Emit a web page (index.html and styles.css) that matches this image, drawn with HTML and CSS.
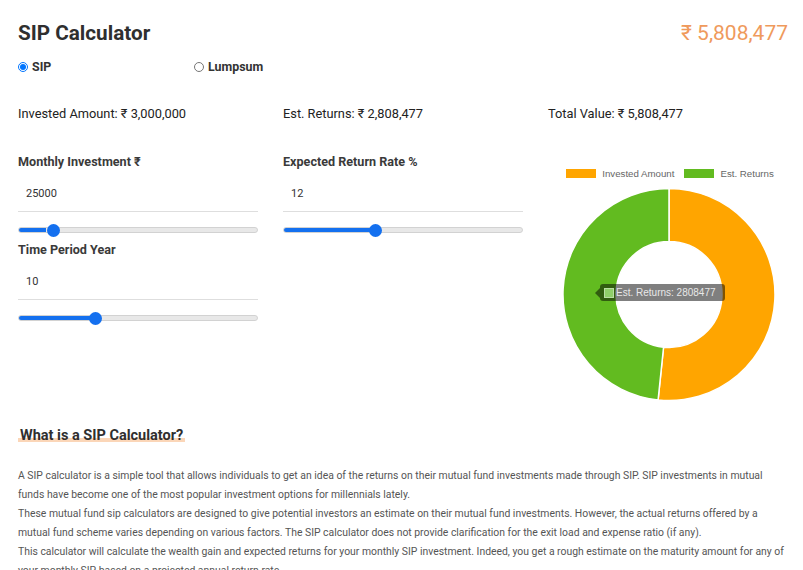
FILE: index.html
```html
<!DOCTYPE html>
<html lang="en">
<head>
<meta charset="utf-8">
<title>SIP Calculator</title>
<link rel="stylesheet" href="styles.css">
</head>
<body>
<div class="page">
  <header class="head">
    <h1 class="title">SIP Calculator</h1>
    <div class="total">₹ 5,808,477</div>
  </header>

  <div class="modes">
    <label class="mode mode-first"><input type="radio" name="mode" checked> SIP</label>
    <label class="mode"><input type="radio" name="mode"> Lumpsum</label>
  </div>

  <div class="summary">
    <div>Invested Amount: ₹ 3,000,000</div>
    <div>Est. Returns: ₹ 2,808,477</div>
    <div>Total Value: ₹ 5,808,477</div>
  </div>

  <div class="grid">
    <div class="col">
      <div class="field">
        <div class="label">Monthly Investment ₹</div>
        <input class="num" type="text" value="25000">
        <input class="range" type="range" min="500" max="200000" value="25000" style="--p:11.5%">
      </div>
      <div class="field">
        <div class="label">Time Period Year</div>
        <input class="num" type="text" value="10">
        <input class="range" type="range" min="1" max="30" value="10" style="--p:31.3%">
      </div>
    </div>
    <div class="col">
      <div class="field">
        <div class="label">Expected Return Rate %</div>
        <input class="num" type="text" value="12">
        <input class="range" type="range" min="1" max="30" value="12" style="--p:37.9%">
      </div>
    </div>
    <div class="col chart">
      <div class="legend">
        <span class="key key-orange"></span><span class="key-text">Invested Amount</span>
        <span class="key key-green"></span><span class="key-text">Est. Returns</span>
      </div>
      <div class="donut-wrap">
        <svg class="donut" width="240" height="226" viewBox="0 0 240 226">
          <path d="M121 6.5 A106 106 0 1 1 110.1 217.94 L115.55 165.22 A53 53 0 1 0 121 59.5 Z" fill="#ffa500" stroke="#fff" stroke-width="1.5"/>
          <path d="M110.1 217.94 A106 106 0 0 1 121 6.5 L121 59.5 A53 53 0 0 0 115.55 165.22 Z" fill="#62bb20" stroke="#fff" stroke-width="1.5"/>
        </svg>
        <div class="tip"><span class="tip-key"></span>Est. Returns: 2808477</div>
      </div>
    </div>
  </div>

  <h2 class="subhead"><span class="mark">What is a SIP Calculator?</span></h2>

  <div class="text">
    <p>A SIP calculator is a simple tool that allows individuals to get an idea of the returns on their mutual fund investments made through SIP. SIP investments in mutual funds have become one of the most popular investment options for millennials lately.</p>
    <p>These mutual fund sip calculators are designed to give potential investors an estimate on their mutual fund investments. However, the actual returns offered by a mutual fund scheme varies depending on various factors. The SIP calculator does not provide clarification for the exit load and expense ratio (if any).</p>
    <p>This calculator will calculate the wealth gain and expected returns for your monthly SIP investment. Indeed, you get a rough estimate on the maturity amount for any of your monthly SIP based on a projected annual return rate.</p>
  </div>
</div>
</body>
</html>
```

FILE: styles.css
```css
* { box-sizing: border-box; }
html, body { margin: 0; background: #fff; }
body { font-family: Roboto, "Liberation Sans", Arial, sans-serif; color: #222; }

.page { padding: 20px 15px 0 18px; }

.head { display: flex; justify-content: space-between; align-items: center; height: 26px; }
.title { margin: 0; font-size: 20.7px; line-height: 26px; font-weight: 700; color: #2f2f2f; }
.total { font-size: 21px; line-height: 26px; color: #ef9a5c; }

.modes { display: flex; margin-top: 13px; height: 16px; }
.mode { display: flex; align-items: center; font-size: 12.4px; line-height: 16px; font-weight: 700; color: #333; }
.mode-first { width: 176px; }
.mode input { width: 10px; height: 10px; margin: 0 4px 0 0; }

.summary { display: grid; grid-template-columns: repeat(3, 240px); column-gap: 25px; margin-top: 31px; font-size: 12.8px; line-height: 16px; color: #222; }

.grid { display: grid; grid-template-columns: repeat(3, 240px); column-gap: 25px; margin-top: 32px; }

.field { display: flex; flex-direction: column; }
.label { font-size: 12.6px; line-height: 16px; font-weight: 700; color: #3a3a3a; }
.num { border: 0; border-bottom: 1px solid #dedede; padding: 16px 8px 11px; height: 42px; font-family: Roboto, sans-serif; font-size: 11px; line-height: 14px; color: #333; outline: none; width: 100%; background: transparent; }

.range { -webkit-appearance: none; appearance: none; width: 240px; height: 12px; margin: 12px 0 6px; background: transparent; }
.range::-webkit-slider-runnable-track { height: 6px; border-radius: 3px; border: 1px solid #d2d2d2; background: linear-gradient(to right, #1470ef var(--p), #e8e8e8 var(--p)); }
.range::-webkit-slider-thumb { -webkit-appearance: none; width: 13px; height: 13px; border-radius: 50%; background: #1470ef; border: 0; margin-top: -4.5px; }

.chart { display: flex; flex-direction: column; align-items: center; }
.legend { display: flex; align-items: center; height: 12px; margin-top: 13px; margin-left: 4px; font-family: "Liberation Sans", Arial, sans-serif; font-size: 9.7px; color: #666; }
.key { width: 30px; height: 9px; margin-right: 6px; }
.key-orange { background: #ffa500; }
.key-green { background: #62bb20; }
.key-text { margin-right: 10px; }
.key-text:last-child { margin-right: 0; }

.donut-wrap { position: relative; width: 240px; height: 226px; margin-top: 3px; }
.donut { display: block; }
.tip { position: absolute; left: 52px; top: 102px; height: 17px; padding: 0 9px 0 4px; display: flex; align-items: center; border-radius: 3px; background: rgba(0,0,0,0.5); color: #e8e8e8; font-family: "Liberation Sans", Arial, sans-serif; font-size: 10px; white-space: nowrap; }
.tip::before { content: ""; position: absolute; left: -5px; top: 3.5px; border-style: solid; border-width: 5px 5px 5px 0; border-color: transparent rgba(0,0,0,0.5) transparent transparent; }
.tip-key { width: 10px; height: 10px; background: #8fcf6a; border: 1px solid #b9dea3; margin-right: 2px; }

.subhead { margin: 18px 0 0; font-size: 14.5px; line-height: 20px; font-weight: 700; color: #2f2f2f; }
.mark { padding: 0 2px; background: linear-gradient(transparent 64%, #fbd6b8 64%, #fbd6b8 90%, transparent 90%); }

.text { margin-top: 20px; font-size: 10.4px; line-height: 19px; color: #555; }
.text p { margin: 0; }
```
